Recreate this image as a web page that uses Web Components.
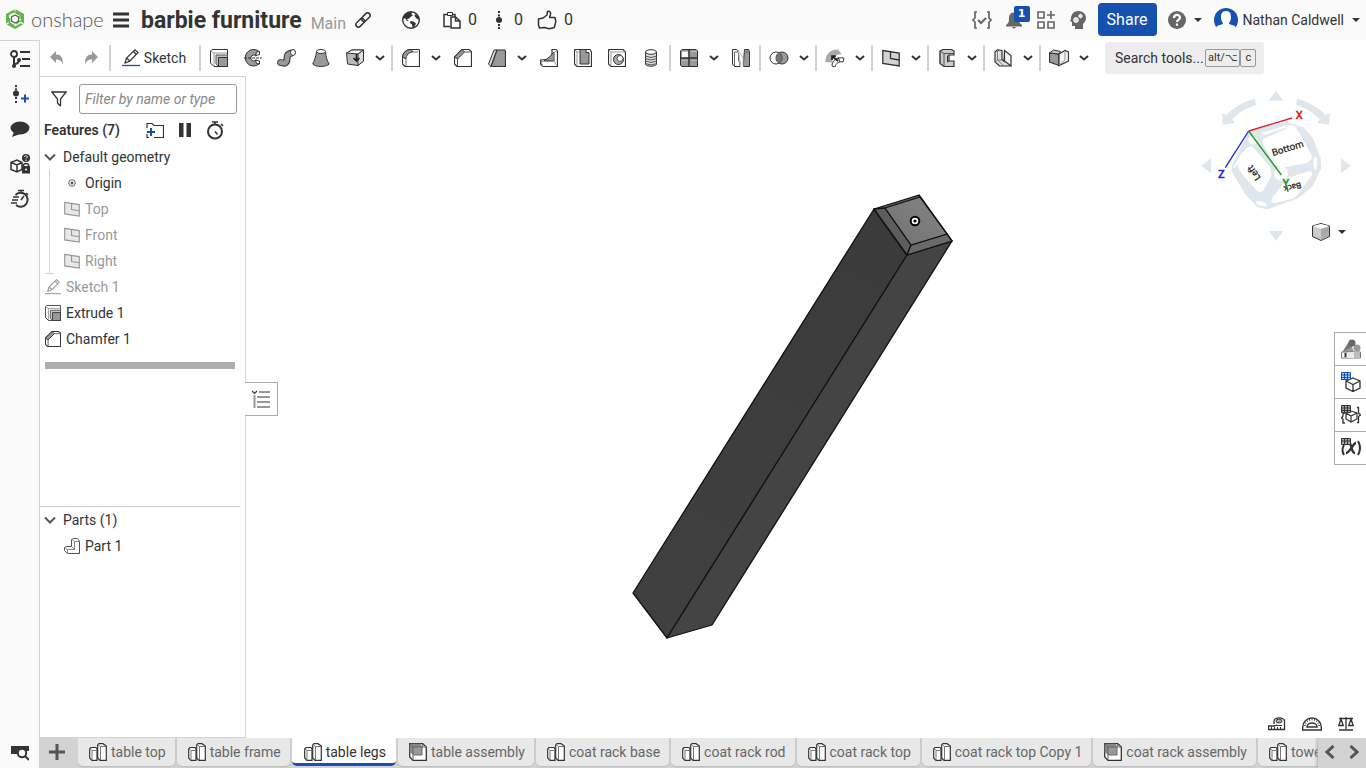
<!DOCTYPE html>
<html lang="en">
<head>
<meta charset="utf-8">
<meta name="viewport" content="width=device-width, initial-scale=1">
<title>barbie furniture | table legs</title>
<style>
  html, body { height: 100%; margin: 0; overflow: hidden; }
  body {
    font-family: Roboto, "Open Sans", sans-serif; font-size: 14px; color: #333; background: #fff;
    --line: #d3d3d3; --bar: #fafafa; --blue: #1651b0;
  }
</style>
</head>
<body>
<cad-app></cad-app>

<script>
const ICONS = {
  logo: ['0 0 20 22', '<path d="M10 1 1 6v10l9 5 9-5V6z" fill="#5db848"/><path d="M10 4 4 7v8l6 3.500 6-3.500V7z" fill="#fafafa"/><path d="M10 0v5M0 17l5-3M20 17l-4-2.500" stroke="#fafafa" stroke-width="1.200"/><path d="m9 3.500 6 3.500v4M4.500 10v5l5 3M16 12.500l-5 3.500" fill="none" stroke="#5db848" stroke-width="1.500"/><path d="m10 7 3.500 2v4L10 15l-3.500-2V9z" fill="#fafafa" stroke="#666" stroke-width="1.300"/>'],
  menu: ['0 0 16 16', '<path d="M0 2h16M0 8h16M0 14h16" stroke="#333" stroke-width="3"/>'],
  link: ['0 0 16 16', '<g fill="none" stroke="#333" stroke-width="1.500" transform="rotate(-45 8 8)"><rect x="-1" y="5.500" width="10" height="5" rx="2.500"/><rect x="7" y="5.500" width="10" height="5" rx="2.500"/></g>'],
  globe: ['0 0 18 18', '<circle cx="9" cy="9" r="8.300" fill="#fafafa" stroke="#333" stroke-width="1.400"/><path d="M3 3.500 7 1l3 .5-.5 2 1.500 1L8.500 6 7 7.500l-2 .5 1 1.500h2l-3 .5-2-3-1.500 1L1 6zM8.500 10l3 .5 2.500 2-1.500 3-2 1-.5-3-2-1.500zM13 3l3 2 1 4-2.500-1.500-2-2.500z" fill="#333"/>'],
  copies: ['0 0 18 18', '<path d="M5 3.500H1v12h6M12 6V3.500H9" fill="none" stroke="#333" stroke-width="1.500"/><path d="M4.500 1.500h5v3h-5z" fill="#fafafa" stroke="#333"/><path d="M8 6h4.500L17 10v7H8zM12.500 6v4H17" fill="#fafafa" stroke="#333" stroke-width="1.500"/>'],
  version: ['0 0 8 18', '<path d="M4 0v2M4 3.500v2M4 13v2M4 16v2" stroke="#333" stroke-width="2"/><circle cx="4" cy="9" r="3" fill="#333"/>'],
  like: ['0 0 20 20', '<path d="M1.500 9 6 8l4-3 .5-3.500c2-1 3.500.5 3 3L12.500 7.500H18l.8 4-1.500 6-5 1.300-5-1.300-4.800.5-1-3z" fill="none" stroke="#333" stroke-width="1.500" stroke-linejoin="round"/>'],
  braces: ['0 0 20 18', '<path d="M5 1H3v6L1 9l2 2v6h2M15 1h2v6l2 2-2 2v6h-2" fill="none" stroke="#666" stroke-width="1.700"/><path d="m6 9 3 3 5-5" fill="none" stroke="#666" stroke-width="2"/>'],
  bell: ['0 0 16 18', '<path d="M8 1.500c4 0 5 3 5 6 0 4 1 5 3 6.500v1.500H0V14c2-1.500 3-2.500 3-6.500 0-3 1-6 5-6zM6 16h4q-2 3-4 0z" fill="#666"/>'],
  apps: ['0 0 18 18', '<path d="M1 1h6v6H1zM1 11h6v6H1zM11 11h6v6h-6zM14 0v8M10 4h8" fill="none" stroke="#666" stroke-width="1.600"/>'],
  brain: ['0 0 16 18', '<path d="M8 0c5 0 8 3 8 7 0 2-1 4-3 6v5H5v-3H2v-4L0 10l1-2C1 3 4 0 8 0z" fill="#666"/><g fill="none" stroke="#fafafa"><circle cx="6" cy="9" r="2" stroke-width="1.300"/><circle cx="10.500" cy="5" r="1.400" stroke-width="1.200"/><path d="M6 6v6M3 9h6M4 7l4 4M8 7l-4 4M10.500 2.500v5M8 5h5" stroke-width=".6"/></g>'],
  help: ['0 0 18 18', '<circle cx="9" cy="9" r="9" fill="#666"/><path d="M6 7c0-4 6-4 6-.5C12 9 9 8.500 9 11M9 12.500v2.200" fill="none" stroke="#fff" stroke-width="2.200"/>'],
  caret: ['0 0 8 4', '<path d="M0 0h8L4 4z" fill="#333"/>'],
  avatar: ['0 0 24 24', '<circle cx="12" cy="12" r="12" fill="#1651b0"/><path d="M12 3c4 0 5 3 5 6 0 3-1 5-2 6 0 2 5 2 6.500 3.500V24h-19v-5.500C4 17 9 17 9 15c-1-1-2-3-2-6 0-3 1-6 5-6z" fill="#fff"/>'],
  undo: ['0 0 14 14', '<path d="M6 0v3.500c5 0 7 3 7 10C11.500 10 10 8.500 6 8.500V12L0 6z" fill="#999"/>'],
  redo: ['0 0 14 14', '<path d="M8 0v3.500c-5 0-7 3-7 10C2.500 10 4 8.500 8 8.500V12l6-6z" fill="#999"/>'],
  pencil: ['0 0 18 18', '<path d="M3 14 4.500 9 13 .8 16 3.500 8 12zM4.500 9l3.500 3M11.500 2.500l3 3" fill="none" stroke="#333" stroke-width="1.200"/><path d="M0 16.500h18" stroke="#1651b0" stroke-width="1.300"/>'],
  chev: ['0 0 10 6', '<path d="m1 1 4 3.500L9 1" fill="none" stroke="#333" stroke-width="2"/>'],
  extrude: ['0 0 18 18', '<path d="M.5 2 2 .5h15.500v17H4L.5 14z" fill="#fff" stroke="#333"/><path d="M4 17V4h13M.5 2 4 4" fill="none" stroke="#999"/><path d="M6 6h11.500v11.500H8.500L6 15z" fill="#c4c4c4" stroke="#555"/><path d="M8.500 8.500h9v9h-9z" fill="#999" stroke="#333"/>'],
  revolve: ['0 0 18 18', '<path d="M15 2.500A8.300 8.300 0 1 0 15 15l-3-4a3 3 0 1 1 0-4z" fill="#999" stroke="#333"/><path d="m11.500 6.500 1-3.500 3-.5 0 3zM11.500 11l1 3.500 3 .5 0-3z" fill="#fff" stroke="#333"/><path d="M0 9h18" stroke="#333" stroke-dasharray="3 1"/>'],
  sweep: ['0 0 20 18', '<path d="M4 13c4 3 6 0 6-3s0-5 5-6" fill="none" stroke="#333" stroke-width="7"/><circle cx="3.500" cy="13.500" r="3" fill="#999" stroke="#333"/><path d="M4 13c4 3 6 0 6-3s0-5 5-6" fill="none" stroke="#999" stroke-width="5"/><ellipse cx="16" cy="3.500" rx="2.500" ry="3" fill="#fff" stroke="#333"/>'],
  loft: ['0 0 18 18', '<path d="M4.500 2.500C4 8 2 12 .8 15c3 3.300 13 3.300 16.400 0C15 12 14 8 13.500 2.500z" fill="#999" stroke="#333"/><ellipse cx="9" cy="2.500" rx="4.500" ry="2" fill="#fff" stroke="#333"/>'],
  thicken: ['0 0 18 18', '<path d="M.5 4 6 1h11.500v11L12 16.500 1.500 15z" fill="#b8b8b8" stroke="#333"/><path d="M.5 4 12 5l5.500-4H6z" fill="#fff" stroke="#333"/><path d="m12 5 5.500-4v11L12 16.500z" fill="#ddd" stroke="#333"/><path d="M10.500 5v7m-3-3 3 3 3-3" fill="none" stroke="#222" stroke-width="1.700"/>'],
  fillet: ['0 0 18 18', '<path d="M3 17.500.5 15V9A8.500 8.500 0 0 1 9 .5h8L17.500 1v16.500z" fill="#fff" stroke="#333" stroke-width="1.200"/><path d="M.5 8C1 4 4 .5 9 .5l2 2.500c-4 0-7 3-7 7z" fill="#999" stroke="#333"/><path d="M4 10v7M11 3h5" stroke="#777" fill="none"/>'],
  chamfer: ['0 0 18 18', '<path d="M3 17.500.5 15V8L8 .5h7l2.500 2v15z" fill="#fff" stroke="#333" stroke-width="1.200"/><path d="M.5 8 8 .5 10.500 3 3.500 10z" fill="#999" stroke="#333"/><path d="M3.500 10v7M10.500 3h7" stroke="#555"/>'],
  draft: ['0 0 18 18', '<path d="M6 1 .5 15 3 17.500 9 1z" fill="#ddd" stroke="#333"/><path d="M9 1h7.500l1 1v15.500H3z" fill="#999" stroke="#333" stroke-width="1.200"/>'],
  rib: ['0 0 18 18', '<path d="M12 .5h4L17.500 2v15.500H3L.5 15v-4L12 10z" fill="#fff" stroke="#333" stroke-width="1.200"/><path d="M14 3v9H4l6-4.500z" fill="#999" stroke="#333"/><path d="m3 17.500-2-5h13v-9l3-2M14 12l3 5" fill="none" stroke="#999"/>'],
  shell: ['0 0 18 18', '<path d="M.5.500H16L17.500 3v14.500H3L.5 15z" fill="#fff" stroke="#333" stroke-width="1.200"/><path d="M6 .5V15h9V3.500h-3V.5z" fill="#999" stroke="#333"/><path d="M3 17V3h3M.5.500 3 3" stroke="#999" fill="none"/>'],
  hole: ['0 0 18 18', '<path d="M.5.500H15L17.500 3v14.500H3L.5 15z" fill="#fff" stroke="#333" stroke-width="1.200"/><path d="M3 17V3h14M.5.500 3 3" stroke="#999" fill="none"/><circle cx="10.500" cy="10.500" r="5" fill="#aaa" stroke="#333"/><circle cx="12" cy="9.500" r="3" fill="#fff" stroke="#555"/>'],
  thread: ['0 0 14 18', '<path d="M1.500 3v12.500c2 2.300 9 2.300 11 0V3z" fill="#ddd" stroke="#333"/><path d="M1 7q6 3 12 0M1 9.500q6 3 12 0M1 12q6 3 12 0M1 14.500q6 3 12 0" fill="none" stroke="#555"/><ellipse cx="7" cy="3" rx="5.500" ry="2.300" fill="#fff" stroke="#333"/>'],
  pattern: ['0 0 18 18', '<path d="M2 .500h14l1.500 1.500v15.500H1.500L.5 16V2z" fill="#999" stroke="#333"/><path d="M2 2h6.500v6.500H2z" fill="#fff"/><path d="M9 1v17M1 9h17" stroke="#333" stroke-width="1.500"/><path d="M2 2.500h6M11 2.500h6M2 11.500h6M11 11.500h6" stroke="#bbb"/>'],
  mirror: ['0 0 18 18', '<path d="M.5.500h4L6.500 3v9l1.500 1v4.500H2.500L.5 15z" fill="#fff" stroke="#333"/><path d="M11.500 13 12.500.500h4l1 2v15h-6z" fill="#999" stroke="#333"/><path d="M2.500 17V3H6M6.500 12v-9M12 3h5" stroke="#666" fill="none"/><path d="m6 1 5 8v8M6.500 1l2 16" stroke="#bbb" fill="none"/>'],
  boolean: ['0 0 20 18', '<circle cx="13" cy="9" r="6" fill="#999" stroke="#333"/><circle cx="7" cy="9" r="6" fill="none" stroke="#333"/><path d="M10 4a6 6 0 0 1 0 10 6 6 0 0 1 0-10z" fill="#777"/>'],
  split: ['0 0 20 18', '<path d="M.5 13C0 6 5 0 13 .5l4 5c-6-1-10 3-10 8z" fill="#aaa"/><path d="M7 17C7 11 12 8 19 9l-1 4c-4-1-7 1-8 5z" fill="#fff" stroke="#333"/><path d="m13 8 2 5" stroke="#333"/><path d="m13 12-6-5m0 4V7h4" stroke="#222" fill="none" stroke-width="1.700"/>'],
  plane: ['0 0 18 18', '<path d="M.8 1.500 17.200 4v13L.8 14.500z" fill="#d3d3d3" stroke="#333" stroke-width="1.300"/><path d="M8.500 2.500v7l8.500 1.500" fill="none" stroke="#333" stroke-width="1.300"/>'],
  frame: ['0 0 16 18', '<path d="M1 2 4 .5h8.500L15 2v4h-5v6h5v5.500H5L1 14.500z" fill="#ccc" stroke="#333" stroke-width="1.200"/><path d="m1 2 4 2.500h10M5 4.500v13M1 2v12" fill="none" stroke="#555"/><path d="M10 6 8.500 7v6l1.500-1" fill="none" stroke="#333"/>'],
  sheet: ['0 0 18 18', '<path d="M1 3 3.500.8l4.500.7v9l2 2 .5-9L16 7v10H5.500L1 13z" fill="#e0e0e0" stroke="#333" stroke-width="1.200"/><path d="m10.500 1.500 6.500 5V17l-6.500-5z" fill="#f4f4f4" stroke="#333" stroke-width="1.200"/><path d="M3.500 1v10l6.500 6M1 13l2.500-2h5" fill="none" stroke="#777"/>'],
  bend: ['0 0 20 18', '<path d="M.5 4 10 5v11.500L.5 13z" fill="#999" stroke="#333" stroke-width="1.200"/><path d="m.5 4 4-3 7 1.500L10 5z" fill="#ccc" stroke="#333"/><path d="m10 5 6-3.500 3.500 1.500v9L10 16.500z" fill="#f4f4f4" stroke="#333" stroke-width="1.200"/><path d="m16 2v9l-6 5" fill="none" stroke="#999"/>'],
  tree: ['0 0 20 18', '<circle cx="4" cy="4" r="3" fill="none" stroke="#333" stroke-width="1.800"/><path d="M4 7v9M4 14q5 0 5-4M10 2h10M12 9h8M10 16h10" fill="none" stroke="#333" stroke-width="2"/><circle cx="4" cy="16" r="2" fill="#333"/><circle cx="9" cy="10" r="2" fill="#333"/>'],
  addversion: ['0 0 20 18', '<path d="M6 0v2M6 3.500v2M6 12v2M6 16v2" stroke="#333" stroke-width="2"/><circle cx="6" cy="8.500" r="3" fill="#333"/><path d="M11 13.500h8M15 9.500v8" stroke="#1651b0" stroke-width="2"/>'],
  comment: ['0 0 20 18', '<ellipse cx="10" cy="8" rx="9.500" ry="6.500" fill="#333"/><path d="M4 12 2 17l8-3z" fill="#333"/>'],
  cubehelp: ['0 0 20 20', '<path d="M1 8.500 7 6l5 2.500v7L7 18l-6-2.500zM1 8.500 7 11l5-2.500M7 11v7" fill="none" stroke="#333" stroke-width="1.500"/><circle cx="16" cy="4" r="4" fill="#333"/><path d="M14.500 3c0-2 3-1.500 3 0L16 4.500M16 5.500v1.500" fill="none" stroke="#fff"/><path d="M12 12h8v7.500h-8z" fill="#333"/><path d="M13.500 12v-1.500q2.500-2 5 0V12" fill="none" stroke="#333" stroke-width="1.500"/><circle cx="16" cy="15.500" r="1" fill="#fff"/>'],
  speed: ['0 0 20 20', '<path d="M5.500 6A7 7 0 1 1 6 16" fill="none" stroke="#333" stroke-width="2"/><path d="M8 1.500h6M11 1.500V4M16 4l2 2M11 11l3-4M3 8h6M2 11h6M1 14h6" stroke="#333" stroke-width="1.500"/>'],
  inspect: ['0 0 18 16', '<path d="M0 1h18v5h-3L11 3 6 6v3H0z" fill="#333"/><circle cx="11" cy="8" r="4.200" fill="#fafafa" stroke="#333" stroke-width="2"/><path d="m14 11 4 4" stroke="#333" stroke-width="2"/>'],
  funnel: ['0 0 16 16', '<path d="M.8 1h14.400L9.500 8v6.500H9L6.500 12V8z" fill="none" stroke="#333" stroke-width="1.300"/>'],
  folder: ['0 0 18 16', '<path d="M1 6V1.500h5L8 3.500h9.500v12H8M1 12v3.500h2" fill="none" stroke="#333" stroke-width="1.200"/><path d="M1 10h8M5 6v8" stroke="#1651b0" stroke-width="2"/>'],
  pause: ['0 0 12 14', '<path d="M0 0h4.500v14H0zM7.500 0H12v14H7.500z" fill="#333"/>'],
  stopwatch: ['0 0 18 20', '<circle cx="9" cy="11.500" r="7" fill="none" stroke="#333" stroke-width="2"/><path d="M6 2h6M9 2v3M15 4l2 2M9 11.500l2.500 3" stroke="#333" stroke-width="1.600"/>'],
  expand: ['0 0 12 8', '<path d="m1 1.500 5 5 5-5" fill="none" stroke="#555" stroke-width="2"/>'],
  origin: ['0 0 8 8', '<circle cx="4" cy="4" r="3.300" fill="#fff" stroke="#555" stroke-width=".9"/><circle cx="4" cy="4" r="1.500" fill="#555"/>'],
  part: ['0 0 16 16', '<path d="M7.500 1.500 9.500.5h4l2 2.500v12.500h-12l-3-3V9.500l2-1h5z" fill="#fff" stroke="#555"/><path d="M3.500 15.500v-4h7V3.500h5M.5 9.500l3 2M7.500 8.500l3 3M7.500 1.500l3 2" fill="none" stroke="#888"/>'],
  list: ['0 0 18 18', '<path d="m0 1 2.500 2.500L5 1M7 2h11M5 7h13M5 12h13M5 17h13" fill="none" stroke="#333" stroke-width="1.200"/><path d="M2.500 5v13" stroke="#999" stroke-width="2"/>'],
  appearance: ['0 0 20 20', '<circle cx="16" cy="9" r="3.500" fill="#999"/><path d="m2 12 7-11 4 3-5 10z" fill="#777"/><circle cx="11" cy="4" r="3.500" fill="#666"/><path d="M.5 13 11 8l2 5z" fill="#999"/><path d="M.5 13h19v6H.5z" fill="#fff" stroke="#777"/><path d="M7 13h6v6H7z" fill="#e8e8e8"/><path d="M13 13h6v6h-6z" fill="#bbb"/><path d="M4.500 14v4" stroke="#333" stroke-width="2"/>'],
  tablecube: ['0 0 20 20', '<path d="m12 6 7 3v7l-7 3.500L5 16V9z M5 9l7 3.500L19 9M12 12.500V19" fill="#fff" stroke="#333" stroke-width="1.300"/><path d="M.5.500h9v7h-9z" fill="#a9d5f5" stroke="#1651b0"/><path d="M3.500 0v8M6.500 0v8M0 3h10M0 5.500h10" stroke="#1651b0"/>'],
  tablebrace: ['0 0 20 20', '<path d="m10 6 6 2v6l-6 3-5-3V8zM5 8l5 3 6-3M10 11v6" fill="#fff" stroke="#333" stroke-width="1.200"/><path d="M4 8H2v3L.5 13 2 14v4h2M16 2.500h1.500V8l2 2-2 1.500v6H16" fill="none" stroke="#333" stroke-width="1.300"/><path d="M.5.500h9v7h-9z" fill="#aaa" stroke="#333"/><path d="M3.500 0v8M6.500 0v8M0 3h10M0 5.500h10" stroke="#333"/>'],
  tablex: ['0 0 20 20', '<path d="M3 7q-3 5 0 10M17 3q4 7 0 14" fill="none" stroke="#333" stroke-width="2"/><path d="M8 5c3 0 2 10 6 10M15 5c-3 0-6 10-10 10" fill="none" stroke="#333" stroke-width="2.400"/><path d="M.5.500h9v6h-9z" fill="#aaa" stroke="#333"/><path d="M3.500 0v7M6.500 0v7M0 3h10" stroke="#333"/>'],
  shaded: ['0 0 18 18', '<path d="m.5 3 8.500-2.500L17.500 3v10.500L9 17.500.5 13.500z" fill="#ccc" stroke="#333"/><path d="m1 3 8-2 8 2-8 3z" fill="#fff"/><path d="m9 6 8-2.500V13L9 17z" fill="#aaa"/>'],
  tape: ['0 0 18 14', '<path d="M6 7V4a5 3 0 0 1 10.500 0v8.500H.5V9H6l3-1" fill="#fff" stroke="#333" stroke-width="1.300"/><ellipse cx="11" cy="4" rx="3" ry="2" fill="#aaa" stroke="#333"/><path d="M3.500 12v-2M6.500 12v-2M9.500 12v-2M12.500 12v-2M6 8.500h8" stroke="#333"/>'],
  protractor: ['0 0 20 14', '<path d="M.7 10a9.300 9 0 0 1 18.600 0v3H.7z" fill="#fff" stroke="#333" stroke-width="1.400"/><path d="M5 10a5 4 0 0 1 10 0z" fill="none" stroke="#333" stroke-width="1.500"/><path d="M3 9a7 6.500 0 0 1 14 0" fill="none" stroke="#555" stroke-width="2" stroke-dasharray="1 1.500"/>'],
  scale: ['0 0 16 14', '<path d="M1 1.500h14M8 0v12M1 13h14M3 2 .8 8.500h4.400zM13 2l-2.200 6.500h4.400z" fill="none" stroke="#333" stroke-width="1.300"/>'],
  plus: ['0 0 16 16', '<path d="M0 8h16M8 0v16" stroke="#555" stroke-width="3"/>'],
  studio: ['0 0 18 18', '<path d="M.7 6 2 4.500h5L8 6v11.300H3L.7 15z" fill="#fff" stroke="#333" stroke-width="1.200"/><path d="M8.700 2 10 .7h4L17.300 3v14.300H11L8.700 15z" fill="#fff" stroke="#333" stroke-width="1.200"/><path d="M3 17V7.500h5M1 5.500l2 2M11.500 17V3.500H17M9 1.500l2.500 2" fill="none" stroke="#777"/>'],
  assembly: ['0 0 18 18', '<path d="M.7.700h13L17.300 4v13.300H4L.7 14z" fill="#fff" stroke="#333" stroke-width="1.300"/><path d="M.7.700h11L13 4v8H4L.7 9z" fill="#888"/><path d="M4 4h9v8H4z" fill="#999" stroke="#666"/><path d="m1 1 3 3M13 4l1-3M4 12v5M13 4h4" stroke="#666"/>'],
  prev: ['0 0 10 14', '<path d="M8.500 1 2 7l6.500 6" fill="none" stroke="#555" stroke-width="3"/>'],
  next: ['0 0 10 14', '<path d="m1.500 1 6.500 6-6.500 6" fill="none" stroke="#555" stroke-width="3"/>']
};

/* Shared base: renders static markup and scoped styles into an open shadow root. */
const RESET = `*{box-sizing:border-box}
  button{font:inherit;color:inherit;background:none;border:0;padding:0;margin:0;display:flex;align-items:center;justify-content:center}
  input{font:inherit;color:inherit;min-width:0;margin:0}
  a{color:inherit;text-decoration:none}`;
class Base extends HTMLElement {
  connectedCallback() {
    if (this.shadowRoot) return;
    const t = document.createElement('template');
    t.innerHTML = `<style>${RESET}${this.css()}</style>${this.html()}`;
    this.attachShadow({ mode: 'open' }).append(t.content.cloneNode(true));
  }
}
const attr = (el, n, d = '') => el.getAttribute(n) || d;

customElements.define('cad-icon', class extends Base {
  css() { return ':host{display:inline-block;flex:none;line-height:0}svg{display:block}'; }
  html() {
    const [vb, body] = ICONS[attr(this, 'name')];
    const [, , w, h] = vb.split(' ');
    const k = +attr(this, 'height', h) / h;
    return `<svg viewBox="${vb}" width="${Math.round(w * k)}" height="${Math.round(h * k)}" aria-hidden="true">${body}</svg>`;
  }
});

customElements.define('app-header', class extends Base {
  css() { return `:host{display:flex;align-items:center;height:40px;padding:0 6px 0 5px;background:var(--bar)}
    .brand{display:flex;align-items:center;gap:6px;width:108px;height:40px;font:300 20px Lato,sans-serif;color:#555;padding-bottom:2px}
    h1{margin:0 9px 0 12px;font-size:23px;line-height:40px;font-weight:700;white-space:nowrap;padding-top:2px}
    .ws{font-size:16px;color:#999;padding-top:6px;margin-right:9px}
    .stat{display:flex;align-items:center;gap:7px;font-size:16px;line-height:40px}
    .stat.wide{gap:11px;margin-left:4px}
    .stats{display:flex;gap:14px;margin-left:23px}
    .globe{margin-left:31px}
    .right{margin-left:auto;display:flex;align-items:center}
    .right>button{flex:none}
    .bell{position:relative;margin:0 15px 0 14px}
    .badge{position:absolute;left:8px;top:-5px;width:16px;height:16px;border-radius:2px;background:var(--blue);color:#fff;font:700 11px/16px "DejaVu Sans",sans-serif;text-align:center}
    .brain{margin:0 12px 0 15px}
    .share{width:59px;height:33px;border-radius:4px;background:var(--blue);color:#fff;font-size:16px;margin-right:11px;margin-bottom:1px}
    .help{gap:8px;margin-right:12px}
    .user{gap:5px;font-size:14px}
    .user cad-icon:last-child{margin-left:3px}`; }
  html() { return `<a class="brand" href="#home"><cad-icon name="logo"></cad-icon>onshape</a>
    <button aria-label="Menu"><cad-icon name="menu"></cad-icon></button>
    <h1>barbie furniture</h1><span class="ws">Main</span>
    <button aria-label="Copy link"><cad-icon name="link"></cad-icon></button>
    <button class="globe" aria-label="Public"><cad-icon name="globe"></cad-icon></button>
    <div class="stats"><button class="stat" aria-label="Copies"><cad-icon name="copies"></cad-icon>0</button>
      <button class="stat wide" aria-label="Versions"><cad-icon name="version"></cad-icon>0</button>
      <button class="stat" aria-label="Likes"><cad-icon name="like"></cad-icon>0</button></div>
    <div class="right">
      <button aria-label="Checks"><cad-icon name="braces"></cad-icon></button>
      <button class="bell" aria-label="Notifications"><cad-icon name="bell"></cad-icon><span class="badge">1</span></button>
      <button aria-label="Apps"><cad-icon name="apps"></cad-icon></button>
      <button class="brain" aria-label="Learning"><cad-icon name="brain"></cad-icon></button>
      <button class="share">Share</button>
      <button class="help" aria-label="Help"><cad-icon name="help"></cad-icon><cad-icon name="caret"></cad-icon></button>
      <button class="user"><cad-icon name="avatar"></cad-icon>Nathan Caldwell<cad-icon name="caret"></cad-icon></button>
    </div>`; }
});

customElements.define('side-rail', class extends Base {
  css() { return `:host{display:flex;flex-direction:column;align-items:center;width:40px;background:var(--bar);border:solid var(--line);border-width:1px 1px 0 0}
    button{width:39px;height:35px}button:last-child{margin-top:auto;height:30px}`; }
  html() { return ['tree', 'addversion', 'comment', 'cubehelp', 'speed', 'inspect']
    .map(n => `<button aria-label="${n}"><cad-icon name="${n}"></cad-icon></button>`).join(''); }
});

customElements.define('tool-button', class extends Base {
  css() { return `:host{display:flex;flex:none}button{height:36px}.i{width:34px}.m{width:18px;padding-right:2px}`; }
  html() {
    const n = attr(this, 'icon');
    return `<button class="i" aria-label="${n}"><cad-icon name="${n}"></cad-icon></button>` +
      (this.hasAttribute('menu') ? `<button class="m" aria-label="More ${n} tools"><cad-icon name="chev"></cad-icon></button>` : '');
  }
});

customElements.define('tool-bar', class extends Base {
  css() { return `:host{display:flex;align-items:center;height:36px;background:#fff}
    i{flex:none;width:2px;height:26px;margin:0 1px;background:var(--line)}
    .sketch{flex:none;width:86px;gap:4px;height:36px;padding-right:2px;font-size:14px}
    .search{display:flex;align-items:center;flex:none;width:159px;height:32px;margin-left:11px;padding:0 10px;background:#ededed;border-radius:3px}
    .search input{flex:none;width:90px;border:0;padding:0;background:none;font-size:14px;outline:0}
    .search input::placeholder{color:#333;opacity:1}
    kbd{flex:none;height:18px;border:1px solid #999;border-radius:2px;font:11px/16px Roboto,"DejaVu Sans",sans-serif;padding:0 2px;white-space:nowrap}
    kbd+kbd{padding:0 4px}`; }
  html() {
    const tools = 'extrude revolve sweep loft thicken+ | fillet+ chamfer draft+ rib shell hole thread | pattern+ mirror | boolean+ | split+ | plane+ | frame+ | sheet+ | bend+'.split(' ');
    return `<tool-button icon="undo"></tool-button><tool-button icon="redo"></tool-button><i></i>
      <button class="sketch"><cad-icon name="pencil"></cad-icon>Sketch</button><i></i>` +
      tools.map(t => t === '|' ? '<i></i>' : `<tool-button icon="${t.replace('+', '')}"${t.endsWith('+') ? ' menu' : ''}></tool-button>`).join('') +
      `<label class="search"><input type="text" placeholder="Search tools..." aria-label="Search tools"><kbd>alt/⌥</kbd><kbd>c</kbd></label>`;
  }
});

customElements.define('tree-row', class extends Base {
  css() { return `:host{display:flex;align-items:center;height:26px;white-space:nowrap}
    :host([hidden-item]){color:#999}:host([hidden-item]) cad-icon{opacity:.5}
    span{width:16px;display:flex;justify-content:center;margin-right:5px}
    :host([group]) span{width:12px;margin-right:7px}`; }
  html() { return `<span><cad-icon name="${attr(this, 'icon')}" ${this.hasAttribute('h') ? `height="${attr(this, 'h')}"` : ''}></cad-icon></span><slot></slot>`; }
});

customElements.define('feature-panel', class extends Base {
  css() { return `:host{position:relative;display:flex;flex-direction:column;flex:none;width:206px;border:solid var(--line);border-width:1px 1px 1px 0;background:#fff}
    .filter{display:flex;align-items:center;gap:12px;padding:7px 8px 0 11px}
    .filter input{flex:1;height:30px;padding:0 5px;border:1px solid #999;border-radius:3px;font-style:italic;background:#fff}
    .filter input::placeholder{color:#888;opacity:1}
    .head{display:flex;align-items:center;height:30px;padding:1px 21px 0 4px;font-weight:600}
    .head button:first-of-type{margin-left:auto}.head button{margin-left:15px}
    .features{flex:1;min-height:0}
    tree-row{padding-left:5px}tree-row[group]{padding-left:4px}
    .kids{margin-left:9px;border-left:1px solid var(--line);position:relative}
    .kids::after{content:"";position:absolute;left:-5px;bottom:0;width:9px;height:1px;background:var(--line)}
    .kids tree-row{padding-left:14px}
    .bar{height:7px;margin:10px 10px 0 5px;background:#aeaeae}
    .parts{flex:0 0 231px;margin-right:5px;border-top:1px solid var(--line)}
    .parts tree-row[sub]{padding-left:24px}
    .flyout{position:absolute;left:205px;top:305px;width:33px;height:34px;background:#fff;border:1px solid #aaa;border-left:0}`; }
  html() { return `<div class="filter"><cad-icon name="funnel"></cad-icon><input type="text" placeholder="Filter by name or type" aria-label="Filter by name or type"></div>
    <div class="head">Features (7)<button aria-label="New folder"><cad-icon name="folder"></cad-icon></button><button aria-label="Suspend"><cad-icon name="pause"></cad-icon></button><button aria-label="Regeneration times"><cad-icon name="stopwatch"></cad-icon></button></div>
    <div class="features">
      <tree-row group icon="expand">Default geometry</tree-row>
      <div class="kids"><tree-row icon="origin">Origin</tree-row>
        ${['Top', 'Front', 'Right'].map(n => `<tree-row hidden-item icon="plane" h="16">${n}</tree-row>`).join('')}</div>
      <tree-row hidden-item icon="pencil" h="16">Sketch 1</tree-row>
      <tree-row icon="extrude" h="16">Extrude 1</tree-row>
      <tree-row icon="chamfer" h="16">Chamfer 1</tree-row>
      <div class="bar"></div>
    </div>
    <div class="parts"><tree-row group icon="expand">Parts (1)</tree-row><tree-row sub icon="part">Part 1</tree-row></div>
    <button class="flyout" aria-label="Show list"><cad-icon name="list"></cad-icon></button>`; }
});

customElements.define('view-cube', class extends Base {
  css() { return `:host{display:block}svg{display:block}text{font-family:"Open Sans","DejaVu Sans",sans-serif}`; }
  html() { return `<svg viewBox="0 0 528 510" width="176" height="170" role="img" aria-label="View cube">
    <g fill="#dfe7ed">
      <path d="M236 62h44l-22-30zM236 453h44l-22 30zM63 235v44l-30-22zM453 235v44l30-22z"/>
      <path d="m194 56 4 19q-42 12-71 42l7 12-36 5-1-35 12 6q31-34 85-49zM322 56l-4 19q42 12 71 42l-7 12 36 5 1-35-12 6q-31-34-85-49z"/>
      <path d="M176 153 290 125 340 142 368 173 392 235 394 265 368 318 325 355 232 388 202 382 165 342 126 275V255z"/>
    </g>
    <g fill="#fff">
      <path d="m221 176 73-32q19-4 33 13l38 68q4 17-18 25l-70 13q-22-3-31-20l-27-51q-4-11 2-16z"/>
      <path d="m175 201 11-2 54 61 5 26-26 48q-9 5-18-2l-43-47q-16-23-17-42 16-30 34-42z"/>
      <path d="m295 293 61-19q17-2 7 15l-39 54q-5 9-17 13l-54 14q-16-3-4-20z"/>
      <circle cx="273" cy="281" r="21"/><ellipse cx="188" cy="181" rx="13" ry="12"/><ellipse cx="306" cy="145" rx="16" ry="8" transform="rotate(18 306 145)"/>
      <ellipse cx="376" cy="250" rx="6" ry="20"/><ellipse cx="214" cy="371" rx="17" ry="6" transform="rotate(15 214 371)"/>
      <path d="m213 160 70-23 8 5-66 22q-9 2-12-4zM132 258l26-42 3 4-28 46zM322 355l16-10 2 8-17 7z"/>
    </g>
    <g text-anchor="middle" fill="#111" stroke="#111" stroke-width=".8">
      <text x="293" y="214" font-size="28" transform="rotate(-17 293 204)">Bottom</text>
      <text x="193" y="286" font-size="27" transform="rotate(-125 193 278)">Left</text>
      <text x="308" y="329" font-size="24" transform="rotate(166 308 321)">Back</text>
    </g>
    <g stroke-width="4" fill="none"><path d="m176 153 130-39" stroke="#d22"/><path d="m176 153-70 110" stroke="#22d"/><path d="m176 153 98 132" stroke="#1a9a1a"/></g>
    <g font-size="33" stroke-width="2"><text x="318" y="118" fill="#d22" stroke="#d22">X</text><text x="85" y="293" fill="#22d" stroke="#22d">Z</text><text x="278" y="320" fill="#1a9a1a" stroke="#1a9a1a">Y</text></g>
  </svg>`; }
});

customElements.define('model-view', class extends Base {
  css() { return `:host{position:relative;display:block;flex:1;min-width:0;background:#fff}
    .model{display:block;width:100%;height:100%}
    view-cube{position:absolute;right:0;top:4px}
    .shade{position:absolute;right:20px;top:147px;gap:8px}
    .dock{position:absolute;right:0;top:256px;width:32px;border:1px solid #aaa;border-right:0;background:#fff}
    .dock button{width:31px;height:33px;border-bottom:1px solid #aaa}.dock button:last-child{border:0;height:32px}
    .measure{position:absolute;right:12px;bottom:7px;display:flex;align-items:center;gap:16px}`; }
  html() { return `<svg class="model" viewBox="246 76 1120 662" role="img" aria-label="Table leg">
      <defs>
        <linearGradient id="l" x1="874" y1="209" x2="667" y2="638" gradientUnits="userSpaceOnUse"><stop stop-color="#3b3b3b"/><stop offset="1" stop-color="#404040"/></linearGradient>
        <linearGradient id="t" x1="0" y1="1" x2="1" y2="0"><stop stop-color="#717171"/><stop offset="1" stop-color="#858585"/></linearGradient></defs>
      <g stroke="#111" stroke-width="1.300" stroke-linejoin="round">
        <path d="m874 209 33 46-240 383-34-45z" fill="url(#l)"/>
        <path d="m907 255 45-14-240 384-45 13z" fill="#444"/>
        <path d="m874 209 45-14 33 46-45 14z" fill="#5a5a5a"/>
        <path d="m874 209 11-1 26 37-4 10z" fill="#5d5d5d"/>
        <path d="m907 255 4-10 36-11 5 7z" fill="#696969"/>
        <path d="m885 208 35-11 27 37-36 11z" fill="url(#t)"/>
      </g>
      <circle cx="915" cy="221" r="4.300" fill="#fff" stroke="#000" stroke-width="2"/><circle cx="915" cy="221" r="1.600"/>
    </svg>
    <view-cube></view-cube>
    <button class="shade" aria-label="View options"><cad-icon name="shaded"></cad-icon><cad-icon name="caret"></cad-icon></button>
    <div class="dock">${['appearance', 'tablecube', 'tablebrace', 'tablex'].map(n => `<button aria-label="${n}"><cad-icon name="${n}"></cad-icon></button>`).join('')}</div>
    <div class="measure">${['tape', 'protractor', 'scale'].map(n => `<button aria-label="${n}"><cad-icon name="${n}"></cad-icon></button>`).join('')}</div>`; }
});

customElements.define('doc-tab', class extends Base {
  css() { return `:host{display:block;flex:none;height:28px}
    a{display:flex;align-items:center;gap:4px;height:28px;padding:0 9px 0 11px;background:#e8e8e8;color:#666;border-radius:0 0 5px 5px;white-space:nowrap;box-shadow:0 1px 2px #bbb}
    :host([active]) a{background:#fff;color:#333;border-bottom:3px solid var(--blue);padding:3px 10px 0 12px;box-shadow:none}`; }
  html() { return `<a href="#tab"><cad-icon name="${attr(this, 'icon', 'studio')}"></cad-icon><slot></slot></a>`; }
});

customElements.define('tab-strip', class extends Base {
  css() { return `:host{position:relative;display:flex;height:30px;background:var(--line);overflow:hidden}
    .add{flex:none;width:34px;height:28px;margin-right:4px}
    .tabs{display:flex;gap:2px;flex:1;min-width:0;overflow:hidden;font-size:14px}
    .nav{display:flex;flex:none;width:48px;box-shadow:-1px 0 3px #aaa;background:var(--line);position:relative}
    .nav button{flex:1;height:28px}`; }
  html() {
    const tabs = ['table top', 'table frame', '*table legs', '+table assembly', 'coat rack base', 'coat rack rod', 'coat rack top', 'coat rack top Copy 1', '+coat rack assembly', 'towe'];
    return `<button class="add" aria-label="Add tab"><cad-icon name="plus"></cad-icon></button><nav class="tabs">` +
      tabs.map(t => `<doc-tab${t[0] === '*' ? ' active' : ''}${t[0] === '+' ? ' icon="assembly"' : ''}>${t.replace(/^[*+]/, '')}</doc-tab>`).join('') +
      `</nav><div class="nav"><button aria-label="Previous tabs"><cad-icon name="prev"></cad-icon></button><button aria-label="Next tabs"><cad-icon name="next"></cad-icon></button></div>`;
  }
});

customElements.define('cad-app', class extends Base {
  css() { return `:host{display:flex;flex-direction:column;height:100vh}
    .body{display:flex;flex:1;min-height:0}
    .main{display:flex;flex-direction:column;flex:1;min-width:0}
    .work{display:flex;flex:1;min-height:0}
    feature-panel{z-index:1}`; }
  html() { return `<app-header></app-header>
    <div class="body"><side-rail></side-rail>
      <div class="main"><tool-bar></tool-bar>
        <div class="work"><feature-panel></feature-panel><model-view></model-view></div>
        <tab-strip></tab-strip></div></div>`; }
});
</script>
</body>
</html>
